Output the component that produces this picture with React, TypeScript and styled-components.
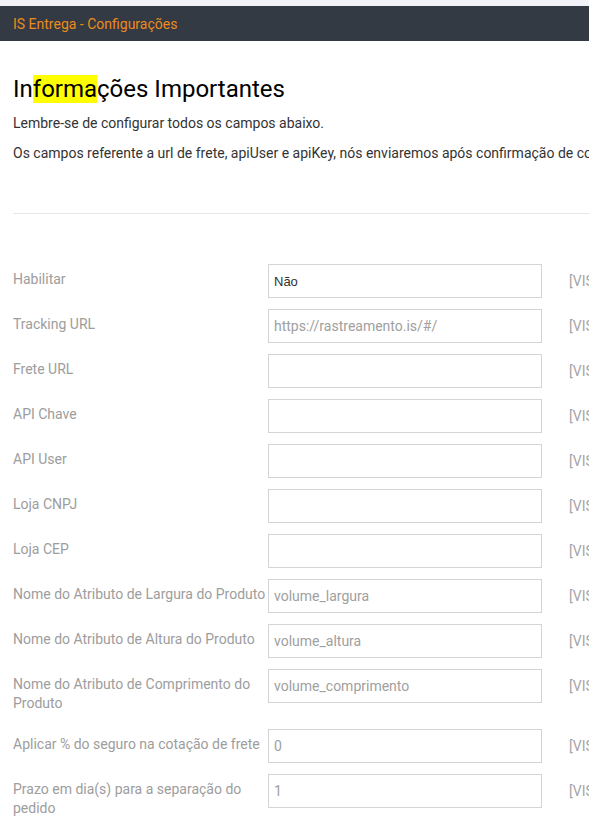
import styled, { createGlobalStyle } from 'styled-components'

const GlobalStyle = createGlobalStyle`
  html, body {
    margin: 0;
    padding: 0;
    background: #ffffff;
    overflow: hidden;
  }
  body {
    font-family: Roboto, 'Noto Sans', sans-serif;
  }
`

const Page = styled.div`
  width: 1000px;
  background: #ffffff;
`

const TopStrip = styled.div`
  height: 6px;
  background: #f1f3f8;
`

const Header = styled.div`
  height: 35px;
  background: #343a44;
  display: flex;
  align-items: center;
  padding: 0 13px;
  color: #eb8c1b;
  font-size: 14px;
`

const Content = styled.div`
  padding: 0 0 0 13px;
`

const Title = styled.h1`
  margin: 34px 0 10px;
  font-size: 24px;
  font-weight: 400;
  line-height: 29px;
  color: #000000;
`

const Mark = styled.span`
  background: #ffff00;
`

const Text = styled.p`
  margin: 0 0 11px;
  font-size: 14px;
  line-height: 19px;
  color: #333333;
  white-space: nowrap;
`

const Divider = styled.hr`
  margin: 50px 0 0;
  border: 0;
  border-top: 1px solid #e6e6e6;
`

const Form = styled.div`
  display: flex;
  flex-direction: column;
  padding-top: 50px;
`

const Row = styled.div`
  display: flex;
  align-items: flex-start;
  margin-bottom: 11px;
`

const Label = styled.div`
  width: 255px;
  flex-shrink: 0;
  padding: 6px 0 5px 0;
  font-size: 14px;
  line-height: 19px;
  color: #9d9d9d;
`

const fieldBase = `
  box-sizing: border-box;
  width: 274px;
  height: 34px;
  flex-shrink: 0;
  margin: 0;
  border: 1px solid #d4d4d4;
  border-radius: 0;
  background: #ffffff;
  padding: 0 5px;
  outline: none;
`

const Input = styled.input`
  ${fieldBase}
  font-family: Roboto, 'Noto Sans', sans-serif;
  font-size: 14px;
  color: #a0a0a0;
  &::placeholder {
    color: #a0a0a0;
  }
`

const Select = styled.select`
  ${fieldBase}
  appearance: none;
  font-family: 'Liberation Sans', Arial, sans-serif;
  font-size: 13px;
  color: #303030;
`

const Scope = styled.div`
  margin-left: 27px;
  padding-top: 8px;
  font-size: 14px;
  line-height: 19px;
  color: #a5a5a5;
  white-space: nowrap;
`

const fields = [
  { label: 'Tracking URL', value: 'https://rastreamento.is/#/' },
  { label: 'Frete URL', value: '' },
  { label: 'API Chave', value: '' },
  { label: 'API User', value: '' },
  { label: 'Loja CNPJ', value: '' },
  { label: 'Loja CEP', value: '' },
  { label: 'Nome do Atributo de Largura do Produto', value: 'volume_largura' },
  { label: 'Nome do Atributo de Altura do Produto', value: 'volume_altura' },
  { label: 'Nome do Atributo de Comprimento do Produto', value: 'volume_comprimento' },
  { label: 'Aplicar % do seguro na cotação de frete', value: '0' },
  { label: 'Prazo em dia(s) para a separação do pedido', value: '1' },
]

export default function App() {
  return (
    <Page>
      <GlobalStyle />
      <TopStrip />
      <Header>IS Entrega - Configurações</Header>
      <Content>
        <Title>
          In<Mark>forma</Mark>ções Importantes
        </Title>
        <Text>Lembre-se de configurar todos os campos abaixo.</Text>
        <Text>
          Os campos referente a url de frete, apiUser e apiKey, nós enviaremos após confirmação de contrato.
        </Text>
        <Divider />
        <Form>
          <Row>
            <Label>Habilitar</Label>
            <Select defaultValue="0">
              <option value="0">Não</option>
              <option value="1">Sim</option>
            </Select>
            <Scope>[VISÃO DA LOJA]</Scope>
          </Row>
          {fields.map((f) => (
            <Row key={f.label}>
              <Label>{f.label}</Label>
              <Input defaultValue={f.value} readOnly />
              <Scope>[VISÃO DA LOJA]</Scope>
            </Row>
          ))}
        </Form>
      </Content>
    </Page>
  )
}
